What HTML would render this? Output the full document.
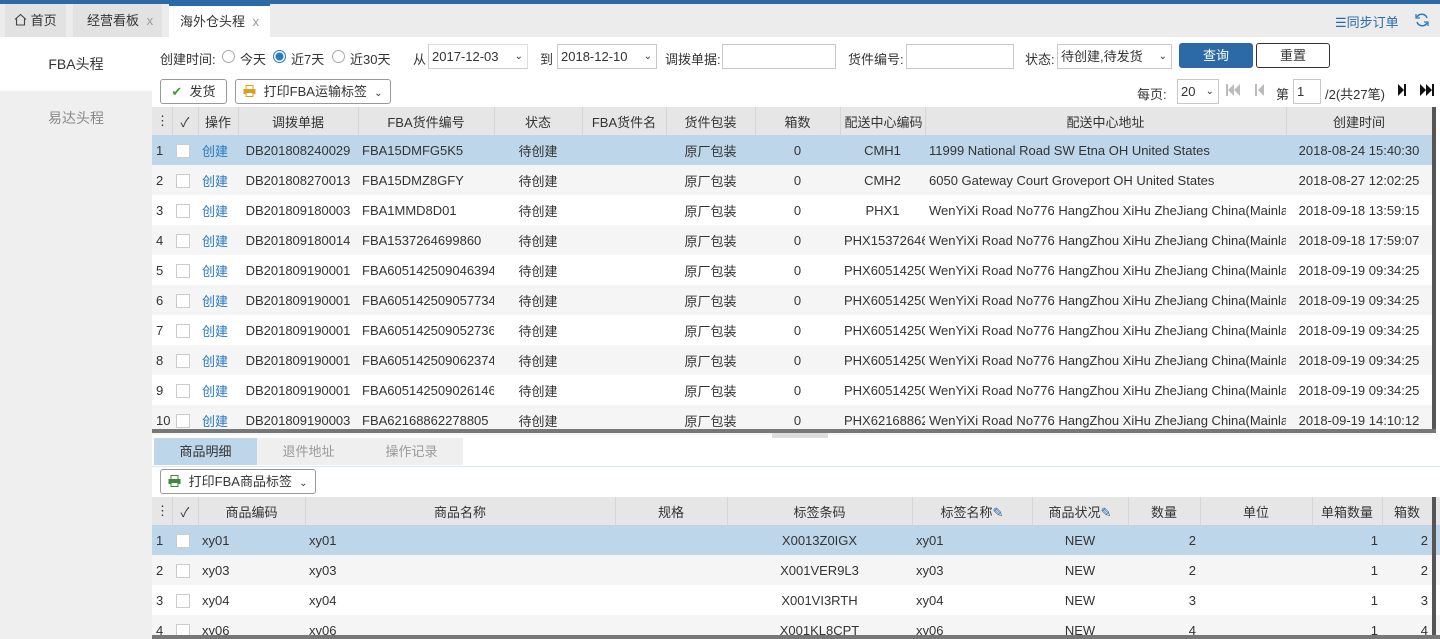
<!DOCTYPE html>
<html><head><meta charset="utf-8"><style>
*{box-sizing:border-box;margin:0;padding:0}
html,body{width:1440px;height:639px;overflow:hidden}
body{position:relative;background:#fff;font-family:"Liberation Sans","Noto Sans CJK SC",sans-serif;font-size:13px;color:#333}
.abs{position:absolute}
.topbar{left:0;top:0;width:1440px;height:4px;background:#2b6aa6}
.tabbar{left:0;top:4px;width:1440px;height:33px;background:#ececec}
.tab{position:absolute;top:4px;height:33px;line-height:33px;font-size:13px;color:#333;background:#e2e2e2;white-space:nowrap}
.side{left:0;top:37px;width:152px;height:602px;background:#efefef}
.sideitem{position:absolute;left:0;width:152px;height:54px;line-height:54px;text-align:center;font-size:14px}
.inp{position:absolute;height:25px;border:1px solid #c8c8c8;background:#fff;font-size:13px;line-height:23px;padding-left:3px}
.btn{position:absolute;height:25px;border:1px solid #999;border-radius:3px;background:#fff;text-align:center;line-height:23px;font-size:13px;white-space:nowrap}
table{border-collapse:collapse;table-layout:fixed;position:absolute}
td,th{height:30px;white-space:nowrap;overflow:hidden;font-weight:normal;padding:0 4px}
th{background:#e6e6e6;border-right:1px solid #d6d6d6;text-align:center;height:28px}
tr.sel td{background:#bed6e9}
tr.alt td{background:#f5f5f5}
.cb{display:inline-block;width:14px;height:14px;border:1px solid #ccc;background:#fff;vertical-align:middle}
.lk{color:#2a7ac0}
.c{text-align:center}.r{text-align:right}
</style></head><body>
<div class="abs topbar"></div>
<div class="abs tabbar"></div>
<div class="tab" style="left:5px;width:61px;padding-left:9px"><svg width="13" height="13" viewBox="0 0 13 13" style="vertical-align:-1px"><path d="M1 6.5L6.5 1.5 12 6.5M2.5 5.5V12h8V5.5" fill="none" stroke="#444" stroke-width="1.1"/></svg> 首页</div>
<div class="tab" style="left:73px;width:89px;padding-left:14px">经营看板 <span style="color:#999;margin-left:4px">x</span></div>
<div class="tab" style="left:169px;width:101px;background:#fff;border-top:2px solid #2b6aa6;line-height:31px;padding-left:11px">海外仓头程 <span style="color:#999;margin-left:4px">x</span></div>
<div class="abs" style="left:1335px;top:12px;color:#2a6aa8;font-size:13px">☰同步订单</div>
<svg class="abs" style="left:1414px;top:12px" width="16" height="16" viewBox="0 0 16 16"><path d="M13 6A5.5 5.5 0 0 0 3 5M3 10a5.5 5.5 0 0 0 10 1" fill="none" stroke="#2a7ac0" stroke-width="1.5"/><path d="M2 2v4h4M14 14v-4h-4" fill="none" stroke="#2a7ac0" stroke-width="1.3"/></svg>

<div class="abs side"></div>
<div class="sideitem" style="top:37px;background:#fff">FBA头程</div>
<div class="sideitem" style="top:91px;color:#888">易达头程</div>

<div class="abs" style="left:160px;top:49px">创建时间:</div>
<div class="abs" style="left:222px;top:50px;width:13px;height:13px;border:1px solid #aaa;border-radius:50%"></div>
<div class="abs" style="left:240px;top:49px">今天</div>
<div class="abs" style="left:273px;top:50px;width:13px;height:13px;border:1px solid #2a7ac0;border-radius:50%;background:radial-gradient(circle,#2a7ac0 3.5px,#fff 4.5px)"></div>
<div class="abs" style="left:291px;top:49px">近7天</div>
<div class="abs" style="left:332px;top:50px;width:13px;height:13px;border:1px solid #aaa;border-radius:50%"></div>
<div class="abs" style="left:350px;top:49px">近30天</div>
<div class="abs" style="left:413px;top:49px">从</div>
<div class="inp" style="left:428px;top:44px;width:100px;border-color:#ddd #ddd #ccc #ccc">2017-12-03<span style="position:absolute;right:4px;font-size:10px">⌄</span></div>
<div class="abs" style="left:540px;top:49px">到</div>
<div class="inp" style="left:557px;top:44px;width:100px">2018-12-10<span style="position:absolute;right:4px;font-size:10px">⌄</span></div>
<div class="abs" style="left:665px;top:49px">调拨单据:</div>
<div class="inp" style="left:722px;top:44px;width:114px"></div>
<div class="abs" style="left:848px;top:49px">货件编号:</div>
<div class="inp" style="left:906px;top:44px;width:108px"></div>
<div class="abs" style="left:1025px;top:49px">状态:</div>
<div class="inp" style="left:1057px;top:44px;width:115px">待创建,待发货<span style="position:absolute;right:4px;font-size:10px">⌄</span></div>
<div class="btn" style="left:1179px;top:43px;width:74px;background:#2b6aa6;border-color:#2b6aa6;color:#fff">查询</div>
<div class="btn" style="left:1256px;top:43px;width:74px;border-color:#333">重置</div>

<div class="btn" style="left:160px;top:79px;width:67px"><span style="color:#4a9a3a">✔</span>&nbsp; 发货</div>
<div class="btn" style="left:235px;top:79px;width:156px"><svg width="13" height="12" viewBox="0 0 13 12" style="vertical-align:-1px"><rect x="3" y="0.5" width="7" height="4" fill="none" stroke="#d9a020"/><rect x="0.5" y="4" width="12" height="5" fill="#d9a020"/><rect x="3" y="7.5" width="7" height="4" fill="#fff" stroke="#d9a020"/></svg>&nbsp; 打印FBA运输标签 &nbsp;<span style="font-size:10px">⌄</span></div>
<div class="abs" style="left:1137px;top:84px">每页:</div>
<div class="inp" style="left:1177px;top:79px;width:42px">20<span style="position:absolute;right:4px;font-size:10px">⌄</span></div>
<svg class="abs" style="left:1226px;top:84px" width="14" height="12" viewBox="0 0 14 12"><rect x="0" y="0" width="2" height="12" fill="#bbb"/><path d="M8 0L2 6 8 12zM14 0L8 6 14 12z" fill="#bbb"/></svg>
<svg class="abs" style="left:1255px;top:84px" width="10" height="12" viewBox="0 0 10 12"><rect x="0" y="0" width="2" height="12" fill="#bbb"/><path d="M9 0L3 6 9 12z" fill="#bbb"/></svg>
<div class="abs" style="left:1276px;top:84px">第</div>
<div class="inp" style="left:1293px;top:79px;width:28px">1</div>
<div class="abs" style="left:1325px;top:84px">/2(共27笔)</div>
<svg class="abs" style="left:1397px;top:84px" width="10" height="12" viewBox="0 0 10 12"><path d="M1 0L7 6 1 12z" fill="#111"/><rect x="7" y="0" width="2" height="12" fill="#111"/></svg>
<svg class="abs" style="left:1420px;top:84px" width="14" height="12" viewBox="0 0 14 12"><path d="M0 0L6 6 0 12zM6 0L12 6 6 12z" fill="#111"/><rect x="12" y="0" width="2" height="12" fill="#111"/></svg>

<table style="left:152px;top:107px;width:1280px">
<colgroup><col style="width:20px"><col style="width:26px"><col style="width:40px"><col style="width:120px"><col style="width:136px"><col style="width:88px"><col style="width:84px"><col style="width:89px"><col style="width:85px"><col style="width:85px"><col style="width:361px"><col style="width:146px"></colgroup>
<tr><th>⋮</th><th>✓</th><th>操作</th><th>调拨单据</th><th>FBA货件编号</th><th>状态</th><th>FBA货件名</th><th>货件包装</th><th>箱数</th><th>配送中心编码</th><th>配送中心地址</th><th>创建时间</th></tr>
<tr class="sel"><td>1</td><td><span class="cb"></span></td><td class="lk">创建</td><td class="c">DB201808240029</td><td>FBA15DMFG5K5</td><td class="c">待创建</td><td></td><td class="c">原厂包装</td><td class="c">0</td><td class="c">CMH1</td><td>11999 National Road SW Etna OH United States</td><td class="c">2018-08-24 15:40:30</td></tr>
<tr class="alt"><td>2</td><td><span class="cb"></span></td><td class="lk">创建</td><td class="c">DB201808270013</td><td>FBA15DMZ8GFY</td><td class="c">待创建</td><td></td><td class="c">原厂包装</td><td class="c">0</td><td class="c">CMH2</td><td>6050 Gateway Court Groveport OH United States</td><td class="c">2018-08-27 12:02:25</td></tr>
<tr><td>3</td><td><span class="cb"></span></td><td class="lk">创建</td><td class="c">DB201809180003</td><td>FBA1MMD8D01</td><td class="c">待创建</td><td></td><td class="c">原厂包装</td><td class="c">0</td><td class="c">PHX1</td><td>WenYiXi Road No776 HangZhou XiHu ZheJiang China(Mainla</td><td class="c">2018-09-18 13:59:15</td></tr>
<tr class="alt"><td>4</td><td><span class="cb"></span></td><td class="lk">创建</td><td class="c">DB201809180014</td><td>FBA1537264699860</td><td class="c">待创建</td><td></td><td class="c">原厂包装</td><td class="c">0</td><td>PHX15372646</td><td>WenYiXi Road No776 HangZhou XiHu ZheJiang China(Mainla</td><td class="c">2018-09-18 17:59:07</td></tr>
<tr><td>5</td><td><span class="cb"></span></td><td class="lk">创建</td><td class="c">DB201809190001</td><td>FBA605142509046394</td><td class="c">待创建</td><td></td><td class="c">原厂包装</td><td class="c">0</td><td>PHX60514250</td><td>WenYiXi Road No776 HangZhou XiHu ZheJiang China(Mainla</td><td class="c">2018-09-19 09:34:25</td></tr>
<tr class="alt"><td>6</td><td><span class="cb"></span></td><td class="lk">创建</td><td class="c">DB201809190001</td><td>FBA605142509057734</td><td class="c">待创建</td><td></td><td class="c">原厂包装</td><td class="c">0</td><td>PHX60514250</td><td>WenYiXi Road No776 HangZhou XiHu ZheJiang China(Mainla</td><td class="c">2018-09-19 09:34:25</td></tr>
<tr><td>7</td><td><span class="cb"></span></td><td class="lk">创建</td><td class="c">DB201809190001</td><td>FBA605142509052736</td><td class="c">待创建</td><td></td><td class="c">原厂包装</td><td class="c">0</td><td>PHX60514250</td><td>WenYiXi Road No776 HangZhou XiHu ZheJiang China(Mainla</td><td class="c">2018-09-19 09:34:25</td></tr>
<tr class="alt"><td>8</td><td><span class="cb"></span></td><td class="lk">创建</td><td class="c">DB201809190001</td><td>FBA605142509062374</td><td class="c">待创建</td><td></td><td class="c">原厂包装</td><td class="c">0</td><td>PHX60514250</td><td>WenYiXi Road No776 HangZhou XiHu ZheJiang China(Mainla</td><td class="c">2018-09-19 09:34:25</td></tr>
<tr><td>9</td><td><span class="cb"></span></td><td class="lk">创建</td><td class="c">DB201809190001</td><td>FBA605142509026146</td><td class="c">待创建</td><td></td><td class="c">原厂包装</td><td class="c">0</td><td>PHX60514250</td><td>WenYiXi Road No776 HangZhou XiHu ZheJiang China(Mainla</td><td class="c">2018-09-19 09:34:25</td></tr>
<tr class="alt"><td>10</td><td><span class="cb"></span></td><td class="lk">创建</td><td class="c">DB201809190003</td><td>FBA62168862278805</td><td class="c">待创建</td><td></td><td class="c">原厂包装</td><td class="c">0</td><td>PHX62168862</td><td>WenYiXi Road No776 HangZhou XiHu ZheJiang China(Mainla</td><td class="c">2018-09-19 14:10:12</td></tr>
</table>
<div class="abs" style="left:1432px;top:107px;width:4px;height:322px;background:#555"></div>
<div class="abs" style="left:152px;top:429px;width:1284px;height:4px;background:#777"></div>
<div class="abs" style="left:772px;top:433px;width:56px;height:5px;background:#ddd"></div>

<div class="abs" style="left:154px;top:438px;width:103px;height:27px;line-height:27px;text-align:center;background:#bed6e9">商品明细</div>
<div class="abs" style="left:257px;top:438px;width:103px;height:27px;line-height:27px;text-align:center;background:#efefef;color:#999">退件地址</div>
<div class="abs" style="left:360px;top:438px;width:103px;height:27px;line-height:27px;text-align:center;background:#efefef;color:#999">操作记录</div>
<div class="abs" style="left:152px;top:466px;width:1288px;height:1px;background:#dbe6ee"></div>
<div class="btn" style="left:160px;top:469px;width:156px"><svg width="13" height="12" viewBox="0 0 13 12" style="vertical-align:-1px"><rect x="3" y="0.5" width="7" height="4" fill="none" stroke="#3a8a3a"/><rect x="0.5" y="4" width="12" height="5" fill="#3a8a3a"/><rect x="3" y="7.5" width="7" height="4" fill="#fff" stroke="#3a8a3a"/></svg>&nbsp; 打印FBA商品标签 &nbsp;<span style="font-size:10px">⌄</span></div>

<table style="left:152px;top:497px;width:1300px">
<colgroup><col style="width:20px"><col style="width:26px"><col style="width:107px"><col style="width:310px"><col style="width:112px"><col style="width:185px"><col style="width:120px"><col style="width:96px"><col style="width:72px"><col style="width:112px"><col style="width:70px"><col style="width:50px"><col style="width:20px"></colgroup>
<tr><th>⋮</th><th>✓</th><th>商品编码</th><th>商品名称</th><th>规格</th><th>标签条码</th><th>标签名称<span style="color:#2a6aa8">✎</span></th><th>商品状况<span style="color:#2a6aa8">✎</span></th><th>数量</th><th>单位</th><th>单箱数量</th><th>箱数</th><th></th></tr>
<tr class="sel"><td>1</td><td><span class="cb"></span></td><td>xy01</td><td>xy01</td><td></td><td class="c">X0013Z0IGX</td><td>xy01</td><td class="c">NEW</td><td class="r">2</td><td></td><td class="r">1</td><td class="r">2</td><td></td></tr>
<tr class="alt"><td>2</td><td><span class="cb"></span></td><td>xy03</td><td>xy03</td><td></td><td class="c">X001VER9L3</td><td>xy03</td><td class="c">NEW</td><td class="r">2</td><td></td><td class="r">1</td><td class="r">2</td><td></td></tr>
<tr><td>3</td><td><span class="cb"></span></td><td>xy04</td><td>xy04</td><td></td><td class="c">X001VI3RTH</td><td>xy04</td><td class="c">NEW</td><td class="r">3</td><td></td><td class="r">1</td><td class="r">3</td><td></td></tr>
<tr class="alt"><td>4</td><td><span class="cb"></span></td><td>xy06</td><td>xy06</td><td></td><td class="c">X001KL8CPT</td><td>xy06</td><td class="c">NEW</td><td class="r">4</td><td></td><td class="r">1</td><td class="r">4</td><td></td></tr>
</table>
<div class="abs" style="left:1432px;top:497px;width:4px;height:142px;background:#555"></div>
<div class="abs" style="left:152px;top:635px;width:1288px;height:4px;background:#777"></div>
</body></html>
